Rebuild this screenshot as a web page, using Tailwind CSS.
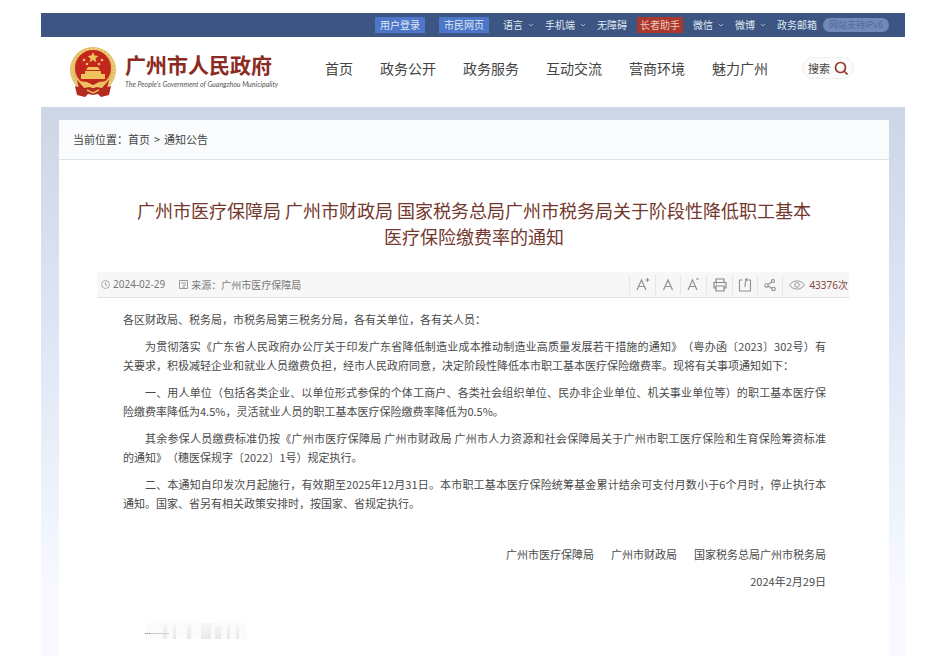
<!DOCTYPE html>
<html lang="zh-CN">
<head>
<meta charset="utf-8">
<meta name="viewport" content="width=device-width, initial-scale=1">
<title>广州市人民政府</title>
<script src="https://cdn.jsdelivr.net/npm/@tailwindcss/browser@4"></script>
</head>
<body class="min-h-screen bg-white px-[41px] pt-[13px] font-['Noto_Sans_CJK_SC',sans-serif] text-[#444] [text-spacing-trim:space-all]">
<div class="flex min-h-[calc(100vh-13px)] flex-col">

<div class="flex h-6 items-center justify-end bg-[#3d5583] pr-4 text-[10px] leading-4 whitespace-nowrap text-[#dfe9f2]">
  <a href="#" class="mr-[14px] bg-[#4d76c9] px-[5px]">用户登录</a>
  <a href="#" class="mr-[14px] bg-[#4d76c9] px-[5px]">市民网页</a>
  <a href="#" class="mr-[10px] flex items-center gap-1">语言<svg class="size-2" viewBox="0 0 8 8" fill="none" stroke="#9db0d3"><path d="M2 3l2 2 2-2"/></svg></a>
  <a href="#" class="mr-[10px] flex items-center gap-1">手机端<svg class="size-2" viewBox="0 0 8 8" fill="none" stroke="#9db0d3"><path d="M2 3l2 2 2-2"/></svg></a>
  <a href="#" class="mr-[10px]">无障碍</a>
  <a href="#" class="mr-[10px] bg-[#a9382f] px-[3px] text-[#f3c9bb]">长者助手</a>
  <a href="#" class="mr-[10px] flex items-center gap-1">微信<svg class="size-2" viewBox="0 0 8 8" fill="none" stroke="#9db0d3"><path d="M2 3l2 2 2-2"/></svg></a>
  <a href="#" class="mr-[10px] flex items-center gap-1">微博<svg class="size-2" viewBox="0 0 8 8" fill="none" stroke="#9db0d3"><path d="M2 3l2 2 2-2"/></svg></a>
  <a href="#" class="mr-[6px]">政务邮箱</a>
  <span class="w-[66px] rounded-full bg-[#7189b9] text-center text-[9px] leading-[14px] text-[#536b9d]">网站支持IPv6</span>
</div>

<header class="flex h-[70px] items-center pr-[51px] pl-7">
  <svg class="h-[52px] w-12 shrink-0" viewBox="0 0 48 52">
    <circle cx="24" cy="24" r="23" fill="#e3bd62"/>
    <circle cx="24" cy="24" r="21" fill="none" stroke="#efd083" stroke-width="2" stroke-dasharray="2 2"/>
    <circle cx="24" cy="22" r="18" fill="#c3261d"/>
    <path d="M24 6l1.500 3.600 3.900.3-3 2.500 1 3.800-3.400-2.100-3.400 2.100 1-3.800-3-2.500 3.900-.3z" fill="#f0c45c"/>
    <g fill="#f0c45c"><circle cx="15" cy="14" r="1.300"/><circle cx="33" cy="14" r="1.300"/><circle cx="18" cy="18" r="1.300"/><circle cx="30" cy="18" r="1.300"/>
    <path d="M17 24l2-3h10l2 3zM16 25h16v3h4v5H12v-5h4z"/></g>
    <path d="M8 34c6 5 10 1 16 1s10 4 16-1l-2 8-14 3-14-3z" fill="#b8251c"/>
    <path d="M9 35l9 1 6 3 6-3 9-1-6 7-6-1-3 2-3-2-6 1z" fill="#edc163"/>
    <path d="M6 40l10 3 8-1 8 1 10-3-2 9-8 2-3-3-5 1-5-1-3 3-8-2z" fill="#b22a20"/>
    <path d="M18 44l6 3 6-3" fill="none" stroke="#e9b653" stroke-width="1.500"/>
  </svg>
  <div class="mb-1 ml-2 w-[152px] shrink-0 whitespace-nowrap">
    <div class="text-[21px] leading-6 font-bold text-[#8c2b23]">广州市人民政府</div>
    <div class="mt-1 font-[Lato,sans-serif] text-[7px] leading-2 text-[#555] italic">The People's Government of Guangzhou Municipality</div>
  </div>
  <nav class="mb-2 ml-auto flex gap-[27px] text-[14px] leading-5 whitespace-nowrap text-[#444]">
    <a href="#">首页</a><a href="#">政务公开</a><a href="#">政务服务</a><a href="#">互动交流</a><a href="#">营商环境</a><a href="#">魅力广州</a>
  </nav>
  <button type="button" class="mb-2 ml-[34px] flex h-[22px] w-[52px] shrink-0 items-center justify-center gap-1 rounded-full border border-[#f0f0f0] bg-[#fbfbfb] text-[11px] whitespace-nowrap">搜索
    <svg class="size-[14px] shrink-0" viewBox="0 0 14 14" fill="none" stroke="#95382e" stroke-width="1.700"><circle cx="6.500" cy="6.500" r="5"/><path d="M10 10l3.500 3.500"/></svg>
  </button>
</header>

<div class="flex grow flex-col bg-linear-to-b from-[#ccd6e4] via-[#dbe4f4] via-35% to-[#f8faff] to-90% pr-4 pl-[18px] pt-[13px]">
<main class="grow bg-white">
  <div class="flex h-10 items-center gap-1 border-b border-[#dde2e5] bg-[#f9fbfc] px-[14px] text-[11px]">
    <span>当前位置：<a href="#">首页</a></span><span>&gt;</span><a href="#">通知公告</a>
  </div>
  <article class="px-[38px] pt-[37px]">
    <h1 class="text-center text-[18px] leading-[26px] text-[#73382d]">广州市医疗保障局 广州市财政局 国家税务总局广州市税务局关于阶段性降低职工基本<br>医疗保险缴费率的通知</h1>
    <div class="mt-[23px] mr-[2px] flex h-[26px] items-center border-b border-[#e2e2e2] bg-[#f7f7f8] pr-px pl-1 text-[10px] whitespace-nowrap text-[#777]">
      <svg class="mr-[3px] size-[9px]" viewBox="0 0 9 9" fill="none" stroke="#aaa"><circle cx="4.500" cy="4.500" r="4"/><path d="M4.500 2v3h2"/></svg>
      <time class="font-['Noto_Sans',sans-serif]" datetime="2024-02-29">2024-02-29</time>
      <svg class="mr-[3px] ml-[14px] size-[9px]" viewBox="0 0 9 9" fill="none" stroke="#999"><path d="M.5.5h8v8h-8zM2 3h5M4 5h3M3 7h3"/></svg>
      <span>来源：广州市医疗保障局</span>
      <div class="ml-auto flex items-center">
        <button type="button" aria-label="放大字体" class="flex h-5 w-[26px] items-center justify-center border-l border-[#e6e6e6]"><svg class="h-4 w-[14px]" viewBox="0 0 14 16" fill="none" stroke="#909090" stroke-width="1.200"><path d="M1 13L5.500 3 10 13M2.800 9.500h5.400M9.500 3h4M11.500 1v4"/></svg></button>
        <button type="button" aria-label="默认字体" class="flex h-5 w-[25px] items-center justify-center border-l border-[#e6e6e6]"><svg class="h-4 w-3" viewBox="0 0 12 16" fill="none" stroke="#909090" stroke-width="1.200"><path d="M1.500 13L6 3l4.500 10M3.300 9.500h5.400"/></svg></button>
        <button type="button" aria-label="缩小字体" class="flex h-5 w-[26px] items-center justify-center border-l border-[#e6e6e6]"><svg class="h-4 w-[14px]" viewBox="0 0 14 16" fill="none" stroke="#909090" stroke-width="1.200"><path d="M1 13L5.500 3 10 13M2.800 9.500h5.400M9 2h3"/></svg></button>
        <button type="button" aria-label="打印" class="flex h-5 w-[26px] items-center justify-center border-l border-[#e6e6e6]"><svg class="size-[14px]" viewBox="0 0 14 14" fill="none" stroke="#888" stroke-width="1.200"><path d="M3 4V1h8v3M3 10H1V4.500h12V10h-2M3 8h8v5H3zM3 6h1"/></svg></button>
        <button type="button" aria-label="导出" class="flex h-5 w-[25px] items-center justify-center border-l border-[#e6e6e6]"><svg class="size-[14px]" viewBox="0 0 14 14" fill="none" stroke="#909090" stroke-width="1.100"><path d="M4.500 2H1.500v11h11V2h-2M7 9c0-4 0-6 2-8M7 1.500L9 .8l.5 2"/></svg></button>
        <button type="button" aria-label="分享" class="flex h-5 w-[25px] items-center justify-center border-l border-[#e6e6e6]"><svg class="size-3" viewBox="0 0 12 12" fill="none" stroke="#909090" stroke-width="1.100"><circle cx="2.500" cy="6.500" r="1.700"/><circle cx="9" cy="2" r="1.500"/><circle cx="9.500" cy="10" r="1.700"/><path d="M4 5.500L7.800 3M4 7.300l4 2"/></svg></button>
        <span class="flex h-5 items-center gap-1 border-l border-[#e6e6e6] pl-[6px] text-[#82483c]"><svg class="h-[10px] w-4" viewBox="0 0 16 10" fill="none" stroke="#999"><path d="M.6 5C4-.5 12-.5 15.400 5 12 10.500 4 10.500.6 5z"/><circle cx="8" cy="5" r="2.300"/></svg><span><span class="font-['Noto_Sans',sans-serif]">43376</span>次</span></span>
      </div>
    </div>
    <div class="mt-3 mr-[25px] ml-[26px] flex flex-col gap-2 text-justify text-[11px] leading-[19px] text-[#4a4a4a]">
      <p>各区财政局、税务局，市税务局第三税务分局，各有关单位，各有关人员：</p>
      <p class="indent-[22px]"><span class="block [text-align-last:justify]">为贯彻落实《广东省人民政府办公厅关于印发广东省降低制造业成本推动制造业高质量发展若干措施的通知》（粤办函〔2023〕302号）有</span><span class="block indent-0">关要求，积极减轻企业和就业人员缴费负担，经市人民政府同意，决定阶段性降低本市职工基本医疗保险缴费率。现将有关事项通知如下：</span></p>
      <p class="indent-[22px]">一、用人单位（包括各类企业、以单位形式参保的个体工商户、各类社会组织单位、民办非企业单位、机关事业单位等）的职工基本医疗保险缴费率降低为4.5%，灵活就业人员的职工基本医疗保险缴费率降低为0.5%。</p>
      <p class="indent-[22px]"><span class="block [text-align-last:justify]">其余参保人员缴费标准仍按《广州市医疗保障局 广州市财政局 广州市人力资源和社会保障局关于广州市职工医疗保险和生育保险筹资标准</span><span class="block indent-0">的通知》（穗医保规字〔2022〕1号）规定执行。</span></p>
      <p class="indent-[22px]">二、本通知自印发次月起施行，有效期至2025年12月31日。本市职工基本医疗保险统筹基金累计结余可支付月数小于6个月时，停止执行本通知。国家、省另有相关政策安排时，按国家、省规定执行。</p>
      <p class="mt-6 flex justify-end gap-[17px] whitespace-nowrap"><span>广州市医疗保障局</span><span>广州市财政局</span><span>国家税务总局广州市税务局</span></p>
      <p class="text-right">2024年2月29日</p>
    </div>
    <svg class="mt-8 ml-12 h-4 w-[102px]" viewBox="0 0 102 16" aria-hidden="true">
      <defs><linearGradient id="fade" x2="0" y2="1"><stop stop-color="#999" stop-opacity=".04"/><stop offset="1" stop-color="#999" stop-opacity=".18"/></linearGradient></defs>
      <path fill="url(#fade)" d="M18 2h4v14h-4zM28 1h3v15h-3zM42 2h4v14h-4zM70 3h6v13h-6zM82 2h3v14h-3zM91 2h3v14h-3zM56 0h10v16H56zM57 2h8v14h-8z"/>
      <path fill="#999" fill-opacity=".04" d="M0 0h102v16H0z"/>
      <path d="M0 10.500h24" stroke="#ccc"/><path d="M0 10.500h6" stroke="#999" stroke-dasharray="1 1"/>
    </svg>
  </article>
</main>
</div>
</div>
</body>
</html>
